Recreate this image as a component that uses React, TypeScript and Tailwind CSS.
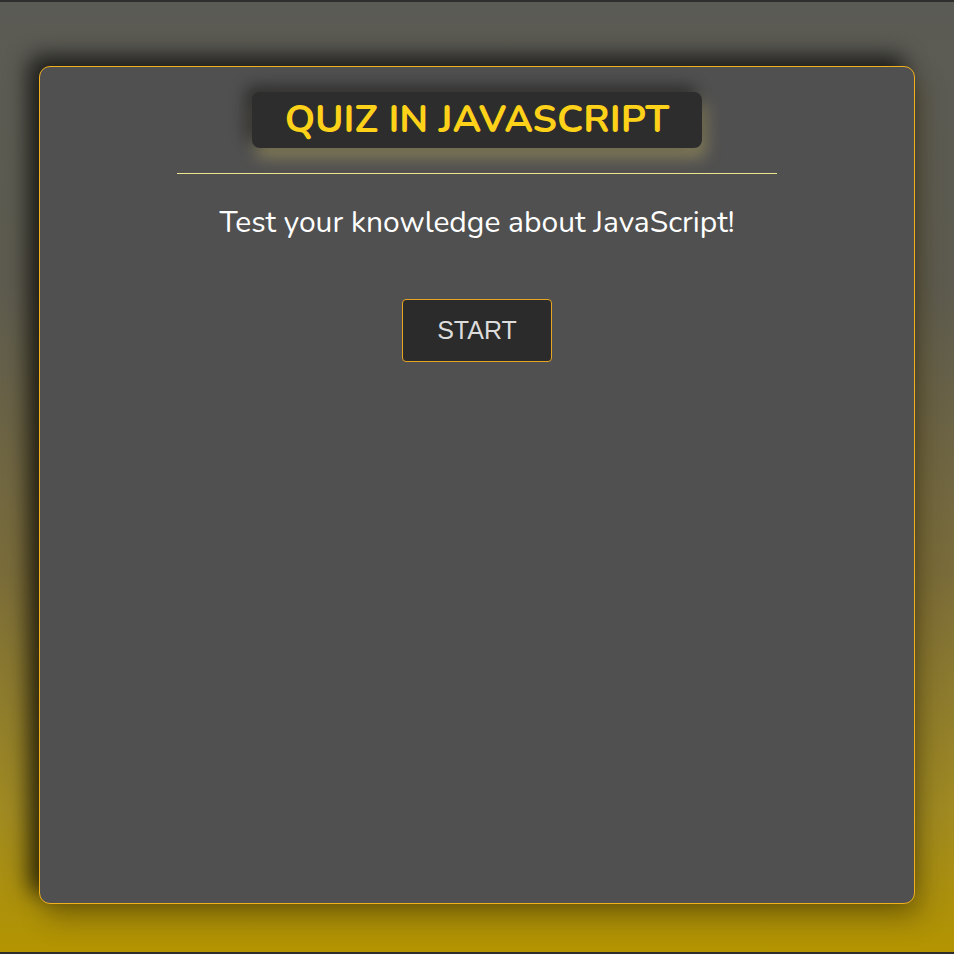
export default function App() {
  return (
    <div
      className="flex h-[954px] w-full flex-col border-y-2 border-[#2e2e2c] bg-[linear-gradient(to_bottom,#5b5b55_0%,#5d5b4f_30%,#7a6c3a_60%,#a08a22_85%,#b39400_100%)] px-[39px] pt-[64px] pb-[48px]"
      style={{ fontFamily: '"Nunito", "Noto Sans", sans-serif' }}
    >
      {/* Card */}
      <div className="flex flex-1 flex-col items-center rounded-[11px] border border-[#f2b01e] bg-[#505050] shadow-[-10px_-10px_22px_rgba(0,0,0,0.7),6px_14px_26px_rgba(60,45,0,0.4)]">
        <h1 className="mt-[25px] rounded-[8px] bg-[#2d2d2d] px-[33px] pt-[6px] pb-[6px] text-[38.7px] leading-[44px] font-bold text-[#ffd21a] shadow-[-6px_-6px_16px_rgba(0,0,0,0.45),4px_10px_16px_rgba(230,210,110,0.35)]">
          QUIZ IN JAVASCRIPT
        </h1>
        <div className="mt-[25px] h-px w-[600px] bg-[#ece58f]" />
        <p className="mt-[29px] text-[30px] leading-[40px] text-white">
          Test your knowledge about JavaScript!
        </p>
        <button
          className="mt-[56px] rounded-[4px] border border-[#e6a624] bg-[#2b2b2b] px-[34px] py-[16px] text-[25px] leading-[29px] text-[#dcdcdc]"
          style={{ fontFamily: '"Liberation Sans", Arial, sans-serif' }}
        >
          START
        </button>
      </div>
    </div>
  );
}
